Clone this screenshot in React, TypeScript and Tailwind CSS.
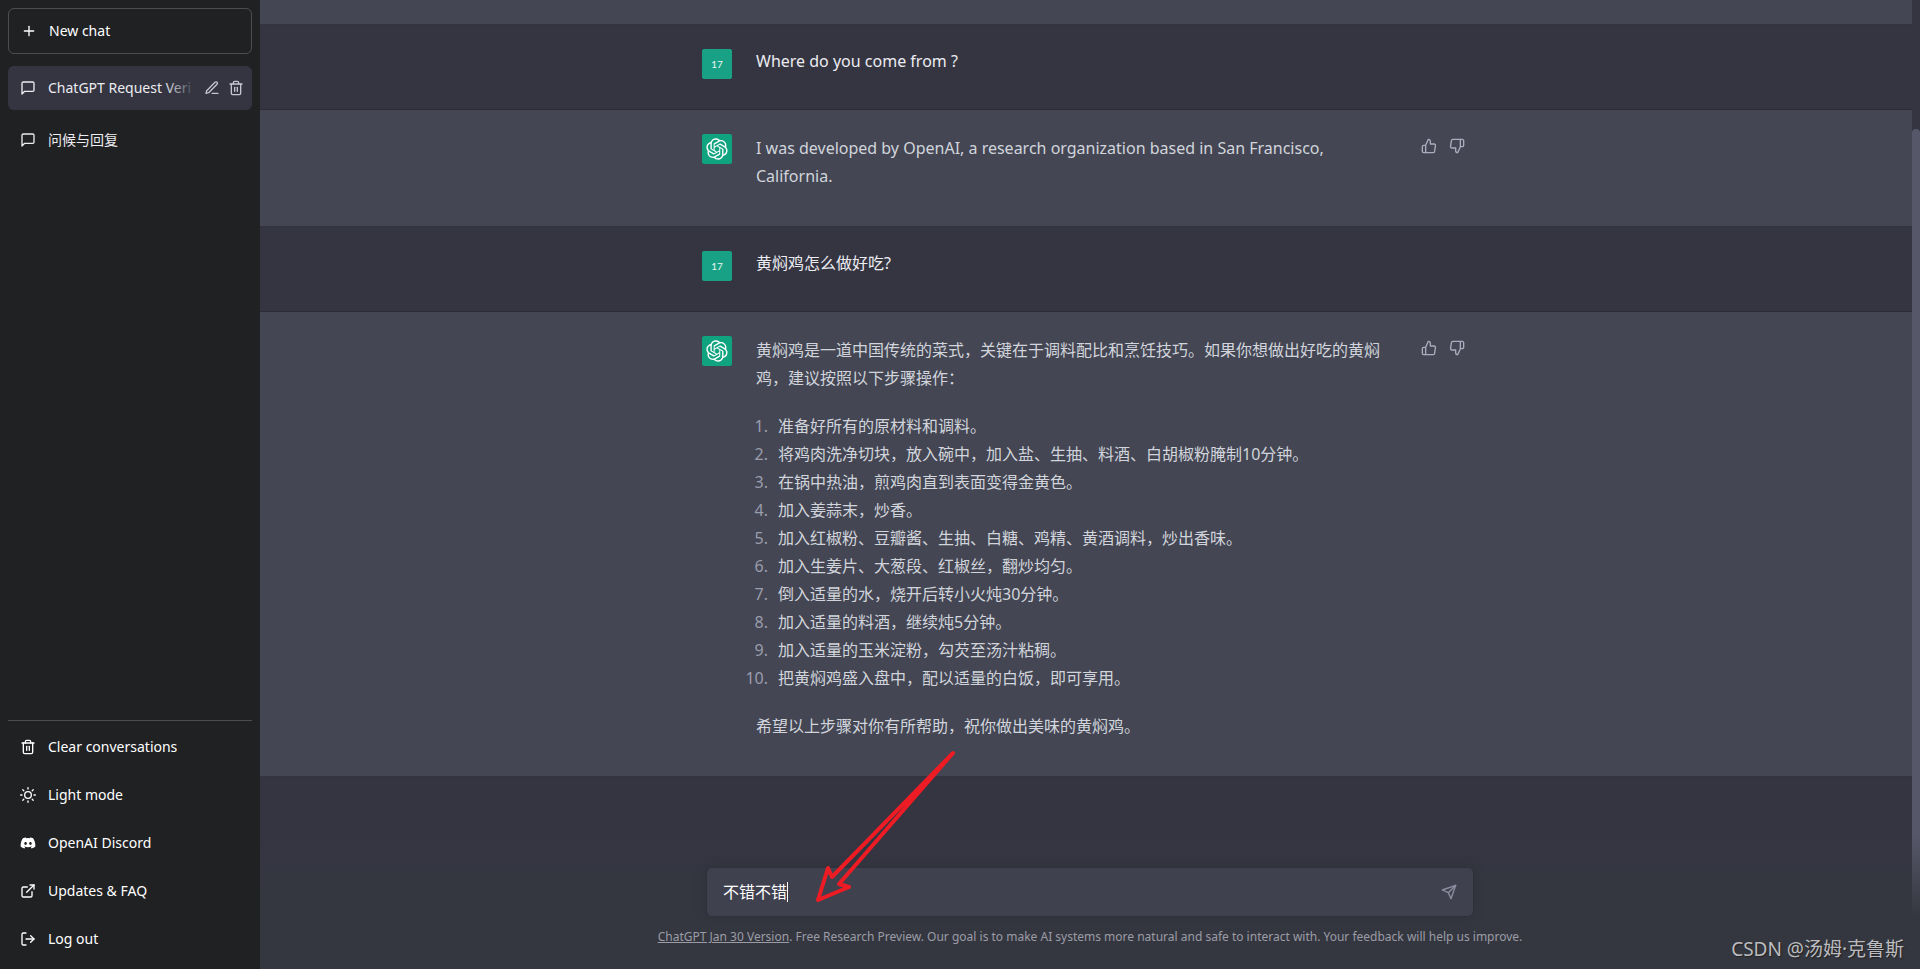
import type { ReactNode } from "react";
import {
  FiPlus,
  FiMessageSquare,
  FiEdit3,
  FiTrash2,
  FiSun,
  FiExternalLink,
  FiLogOut,
  FiThumbsUp,
  FiThumbsDown,
  FiSend,
} from "react-icons/fi";
import { FaDiscord } from "react-icons/fa";

const steps = [
  "准备好所有的原材料和调料。",
  "将鸡肉洗净切块，放入碗中，加入盐、生抽、料酒、白胡椒粉腌制10分钟。",
  "在锅中热油，煎鸡肉直到表面变得金黄色。",
  "加入姜蒜末，炒香。",
  "加入红椒粉、豆瓣酱、生抽、白糖、鸡精、黄酒调料，炒出香味。",
  "加入生姜片、大葱段、红椒丝，翻炒均匀。",
  "倒入适量的水，烧开后转小火炖30分钟。",
  "加入适量的料酒，继续炖5分钟。",
  "加入适量的玉米淀粉，勾芡至汤汁粘稠。",
  "把黄焖鸡盛入盘中，配以适量的白饭，即可享用。",
];

const menu = [
  { label: "Clear conversations", icon: <FiTrash2 className="size-4" /> },
  { label: "Light mode", icon: <FiSun className="size-4" /> },
  { label: "OpenAI Discord", icon: <FaDiscord className="size-4" /> },
  { label: "Updates & FAQ", icon: <FiExternalLink className="size-4" /> },
  { label: "Log out", icon: <FiLogOut className="size-4" /> },
];

function OpenAILogo() {
  return (
    <svg viewBox="0 0 41 41" fill="none" className="size-full" aria-hidden="true">
      <path
        fill="currentColor"
        d="M37.5324 16.8707C37.9808 15.5241 38.1363 14.0974 37.9886 12.6859C37.8409 11.2744 37.3934 9.91076 36.676 8.68622C35.6126 6.83404 33.9882 5.3676 32.0373 4.4985C30.0864 3.62941 27.9098 3.40259 25.8215 3.85078C24.8796 2.7893 23.7219 1.94125 22.4257 1.36341C21.1295 0.785575 19.7249 0.491269 18.3058 0.500197C16.1708 0.495044 14.0893 1.16803 12.3614 2.42214C10.6335 3.67624 9.34853 5.44666 8.6917 7.47815C7.30085 7.76286 5.98686 8.3414 4.8377 9.17505C3.68854 10.0087 2.73073 11.0782 2.02839 12.312C0.956464 14.1591 0.498905 16.2988 0.721698 18.4228C0.944492 20.5467 1.83612 22.5449 3.268 24.1293C2.81966 25.4759 2.66413 26.9026 2.81182 28.3141C2.95951 29.7256 3.40701 31.0892 4.12437 32.3138C5.18791 34.1659 6.8123 35.6322 8.76321 36.5013C10.7141 37.3704 12.8907 37.5973 14.9789 37.1492C15.9208 38.2107 17.0786 39.0587 18.3747 39.6366C19.6709 40.2144 21.0755 40.5087 22.4946 40.4998C24.6307 40.5054 26.7133 39.8321 28.4418 38.5772C30.1704 37.3223 31.4556 35.5506 32.1119 33.5179C33.5027 33.2332 34.8167 32.6547 35.9659 31.821C37.115 30.9874 38.0728 29.9178 38.7752 28.684C39.8458 26.8371 40.3023 24.6979 40.0789 22.5748C39.8556 20.4517 38.9639 18.4544 37.5324 16.8707ZM22.4978 37.8849C20.7443 37.8874 19.0459 37.2733 17.6994 36.1501C17.7601 36.117 17.8666 36.0586 17.936 36.0161L25.9004 31.4156C26.1003 31.3019 26.2663 31.137 26.3813 30.9378C26.4964 30.7386 26.5563 30.5124 26.5549 30.2825V19.0542L29.9213 20.998C29.9389 21.0068 29.9541 21.0198 29.9656 21.0359C29.977 21.052 29.9842 21.0707 29.9867 21.0902V30.3889C29.9842 32.375 29.1946 34.2791 27.7909 35.6841C26.3872 37.0892 24.4838 37.8806 22.4978 37.8849ZM6.39227 31.0064C5.51397 29.4888 5.19742 27.7107 5.49804 25.9832C5.55718 26.0187 5.66048 26.0818 5.73461 26.1244L13.699 30.7248C13.8975 30.8408 14.1233 30.902 14.3532 30.902C14.583 30.902 14.8088 30.8408 15.0073 30.7248L24.731 25.1103V28.9979C24.7321 29.0177 24.7283 29.0376 24.7199 29.0556C24.7115 29.0736 24.6988 29.0893 24.6829 29.1012L16.6317 33.7497C14.9096 34.7416 12.8643 35.0097 10.9447 34.4954C9.02506 33.9811 7.38785 32.7263 6.39227 31.0064ZM4.29707 13.6194C5.17156 12.0998 6.55279 10.9364 8.19885 10.3327C8.19885 10.4013 8.19491 10.5228 8.19491 10.6071V19.808C8.19351 20.0378 8.25334 20.2638 8.36823 20.4629C8.48312 20.6619 8.64893 20.8267 8.84863 20.9404L18.5723 26.5542L15.206 28.4979C15.1894 28.5089 15.1703 28.5155 15.1505 28.5173C15.1307 28.5191 15.1107 28.516 15.0924 28.5082L7.04046 23.8557C5.32135 22.8601 4.06716 21.2235 3.55289 19.3046C3.03862 17.3858 3.30624 15.3413 4.29707 13.6194ZM31.955 20.0556L22.2312 14.4411L25.5976 12.4981C25.6142 12.4872 25.6333 12.4805 25.6531 12.4787C25.6729 12.4769 25.6928 12.4801 25.7111 12.4879L33.7631 17.1364C34.9967 17.849 36.0017 18.8982 36.6606 20.1613C37.3194 21.4244 37.6047 22.849 37.4832 24.2684C37.3617 25.6878 36.8382 27.0432 35.9743 28.1759C35.1103 29.3086 33.9415 30.1717 32.6047 30.6641C32.6047 30.5947 32.6047 30.4733 32.6047 30.3889V21.188C32.6066 20.9586 32.5474 20.7328 32.4332 20.5338C32.319 20.3348 32.154 20.1698 31.955 20.0556ZM35.3055 15.0128C35.2464 14.9765 35.1431 14.9142 35.069 14.8717L27.1045 10.2712C26.906 10.1554 26.6803 10.0943 26.4504 10.0943C26.2206 10.0943 25.9948 10.1554 25.7963 10.2712L16.0726 15.8858V11.9982C16.0715 11.9783 16.0753 11.9585 16.0837 11.9405C16.0921 11.9225 16.1048 11.9068 16.1207 11.8949L24.1719 7.25025C25.4053 6.53903 26.8158 6.19376 28.2383 6.25482C29.6608 6.31589 31.0364 6.78077 32.2044 7.59508C33.3723 8.40939 34.2842 9.53945 34.8334 10.8531C35.3826 12.1667 35.5464 13.6095 35.3055 15.0128ZM14.2424 21.9419L10.8752 19.9981C10.8576 19.9893 10.8423 19.9763 10.8309 19.9602C10.8195 19.9441 10.8122 19.9254 10.8098 19.9058V10.6071C10.8107 9.18295 11.2173 7.78848 11.9819 6.58696C12.7466 5.38544 13.8377 4.42659 15.1275 3.82264C16.4173 3.21869 17.8524 2.99464 19.2649 3.1767C20.6775 3.35876 22.0089 3.93941 23.1034 4.85067C23.0427 4.88379 22.937 4.94215 22.8668 4.98473L14.9024 9.58517C14.7025 9.69878 14.5366 9.86356 14.4215 10.0626C14.3065 10.2616 14.2466 10.4877 14.2479 10.7175L14.2424 21.9419ZM16.071 17.9991L20.4018 15.4978L24.7325 17.9975V22.9985L20.4018 25.4983L16.071 22.9985V17.9991Z"
      />
    </svg>
  );
}

function UserMessage({ children }: { children: ReactNode }) {
  return (
    <div className="border-b border-[#2b2c36] bg-[#343541] text-[#ececf1]">
      <div className="mx-auto flex max-w-3xl gap-6 py-6">
        <div className="flex size-[30px] shrink-0 items-center justify-center rounded-xs bg-[#19a186] font-[Lato,sans-serif] text-[10px] text-white/90">
          17
        </div>
        <p className="mb-3 flex-1 leading-6">{children}</p>
      </div>
    </div>
  );
}

function AssistantMessage({ children }: { children: ReactNode }) {
  return (
    <div className="border-b border-[#32343d] bg-[#444654] text-[#d1d5db]">
      <div className="mx-auto flex max-w-3xl py-6">
        <div className="mr-6 size-[30px] shrink-0 rounded-xs bg-[#10a37f] p-1 text-white">
          <OpenAILogo />
        </div>
        <div className="mb-3 flex-1 space-y-5 pr-6 leading-7">{children}</div>
        <div className="flex w-[61px] items-start gap-1 pl-2 text-[#acacbe]">
          <button className="p-1" aria-label="Good answer">
            <FiThumbsUp className="size-4" />
          </button>
          <button className="p-1" aria-label="Bad answer">
            <FiThumbsDown className="size-4" />
          </button>
        </div>
      </div>
    </div>
  );
}

function Sidebar() {
  return (
    <nav className="flex w-[260px] shrink-0 flex-col gap-1 bg-[#202123] p-2 text-sm text-white">
      <button className="mb-2 flex items-center gap-3 rounded-md border border-white/20 p-3">
        <FiPlus className="size-4" />
        New chat
      </button>

      {/* History */}
      <div className="flex flex-1 flex-col gap-2 border-b border-white/20">
        <div className="relative flex items-center gap-3 rounded-md bg-[#343541] p-3 pr-14 text-[#ececf1]">
          <FiMessageSquare className="size-4 shrink-0" />
          <a href="#" className="relative flex-1 overflow-hidden whitespace-nowrap">
            ChatGPT Request Veri
            <span className="absolute inset-y-0 right-0 w-8 bg-linear-to-l from-[#343541]" />
          </a>
          <div className="absolute right-1 flex text-[#c5c5d2]">
            <button className="p-1" aria-label="Rename">
              <FiEdit3 className="size-4" />
            </button>
            <button className="p-1" aria-label="Delete">
              <FiTrash2 className="size-4" />
            </button>
          </div>
        </div>
        <a href="#" className="flex items-center gap-3 rounded-md p-3 text-[#ececf1]">
          <FiMessageSquare className="size-4" />
          问候与回复
        </a>
      </div>

      {menu.map((item) => (
        <a key={item.label} href="#" className="flex items-center gap-3 rounded-md p-3">
          {item.icon}
          {item.label}
        </a>
      ))}
    </nav>
  );
}

function Composer() {
  return (
    <div className="absolute inset-x-0 bottom-0 bg-linear-to-b from-[#353740]/0 to-[#353740] to-60% pt-8">
      <form className="relative mx-auto flex h-[50px] max-w-3xl items-center rounded-md border border-[#30313b] bg-[#40414f] px-4 text-white shadow-[0_0_15px_rgba(0,0,0,0.1)]">
        <input
          type="text"
          aria-label="Message"
          defaultValue="不错不错"
          className="field-sizing-content outline-none"
        />
        <span className="h-5 w-px bg-white" />
        <button className="ml-auto text-[#8e8ea0]" aria-label="Send">
          <FiSend className="size-4" />
        </button>

        {/* Hand-drawn arrow pointing at the message */}
        <svg
          className="pointer-events-none absolute bottom-3 left-[107px] h-[154px] w-[144px]"
          viewBox="0 0 144 154"
          fill="none"
          stroke="#ed1c24"
          strokeWidth="4"
          strokeLinejoin="round"
          aria-hidden="true"
        >
          <path d="M139 3L18 127L14 118L4 150L35 137L25 134Z" />
        </svg>
      </form>
      <p className="pt-3 pb-6 text-center text-xs text-[#9b9ca6]">
        <a href="#" className="underline">ChatGPT Jan 30 Version</a>. Free Research Preview. Our goal is to make AI
        systems more natural and safe to interact with. Your feedback will help us improve.
      </p>
    </div>
  );
}

export default function App() {
  return (
    <div className="flex h-screen overflow-hidden bg-[#343541] font-['Noto_Sans','Noto_Sans_CJK_SC',sans-serif]">
      <Sidebar />
      <main className="relative flex flex-1">
        <div className="flex-1">
          <div className="h-[25px] border-b border-[#32343d] bg-[#444654]" />
          <UserMessage>Where do you come from ?</UserMessage>
          <AssistantMessage>
            <p>I was developed by OpenAI, a research organization based in San Francisco, California.</p>
          </AssistantMessage>
          <UserMessage>黄焖鸡怎么做好吃?</UserMessage>
          <AssistantMessage>
            <p>
              黄焖鸡是一道中国传统的菜式，关键在于调料配比和烹饪技巧。如果你想做出好吃的黄焖鸡，建议按照以下步骤操作：
            </p>
            <ol className="-ml-3">
              {steps.map((step, i) => (
                <li key={step} className="flex gap-2.5">
                  <span className="w-6 shrink-0 text-right text-[#9a9dab]">{i + 1}.</span>
                  {step}
                </li>
              ))}
            </ol>
            <p>希望以上步骤对你有所帮助，祝你做出美味的黄焖鸡。</p>
          </AssistantMessage>
        </div>

        {/* Scrollbar */}
        <div className="w-2 pt-[129px]">
          <div className="h-full rounded-full bg-[#565869]" />
        </div>

        <Composer />
        <p className="absolute right-4 bottom-1.5 text-[19px] leading-7 text-[#bbbcbf] [text-shadow:1px_1px_1px_#222]">
          CSDN @汤姆·克鲁斯
        </p>
      </main>
    </div>
  );
}
